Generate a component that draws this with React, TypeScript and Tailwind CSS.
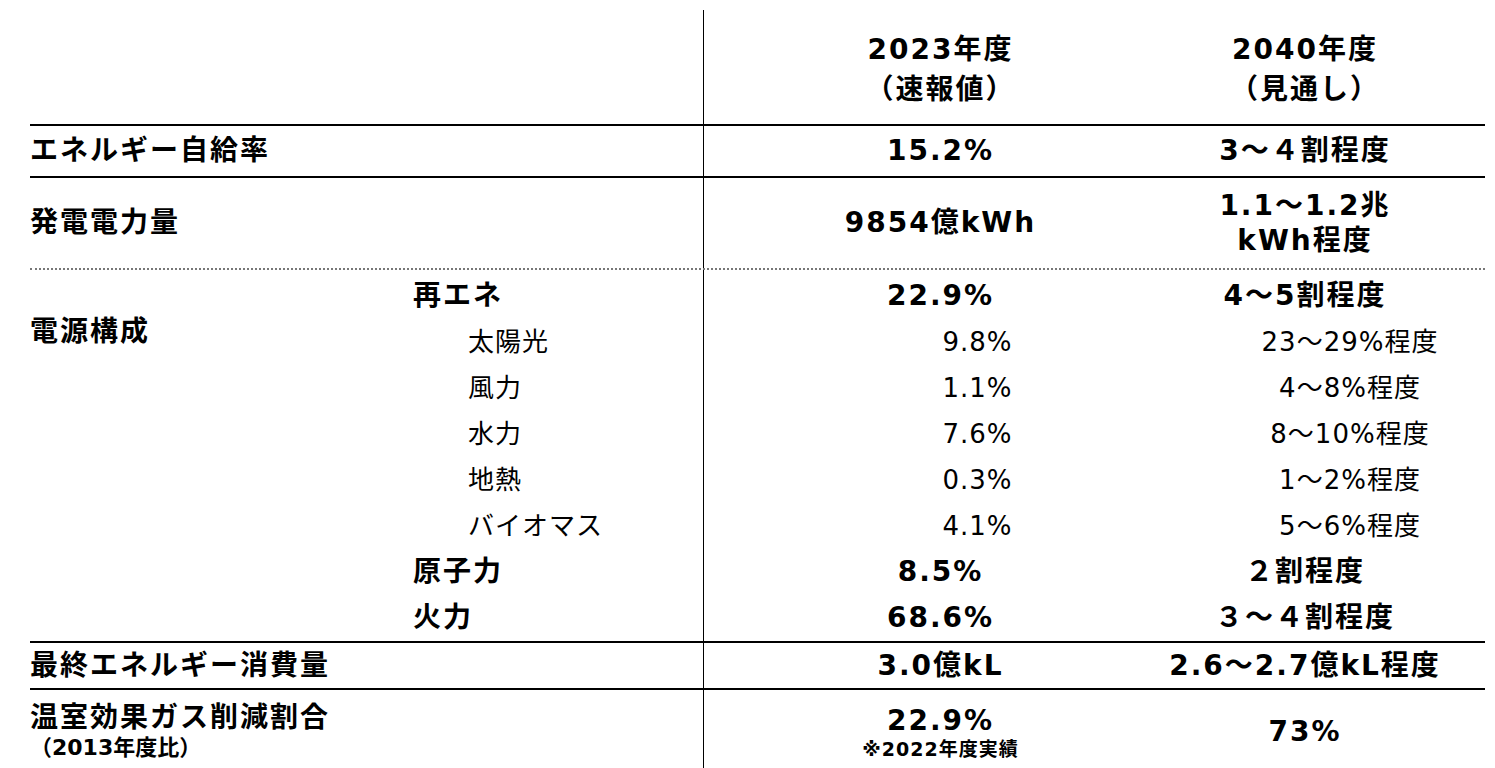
import React from "react";

const font = "font-['DejaVu_Sans','Noto_Sans_CJK_JP',sans-serif]";

type SubRow = {
  label: string;
  strong: boolean;
  now: string;
  future: string;
};

const subRows: SubRow[] = [
  { label: "再エネ", strong: true, now: "22.9%", future: "4～5割程度" },
  { label: "太陽光", strong: false, now: "9.8%", future: "23～29%程度" },
  { label: "風力", strong: false, now: "1.1%", future: "4～8%程度" },
  { label: "水力", strong: false, now: "7.6%", future: "8～10%程度" },
  { label: "地熱", strong: false, now: "0.3%", future: "1～2%程度" },
  { label: "バイオマス", strong: false, now: "4.1%", future: "5～6%程度" },
  { label: "原子力", strong: true, now: "8.5%", future: "２割程度" },
  { label: "火力", strong: true, now: "68.6%", future: "３～４割程度" },
];

const bold = "text-[28px] font-bold tracking-[2px] whitespace-nowrap";
const regular = "text-[26px] font-normal tracking-[1px] whitespace-nowrap";

const Cell = ({ className, children }: { className?: string; children?: React.ReactNode }) => (
  <div className={`flex justify-center items-center ${className ?? ""}`}>{children}</div>
);

export default function App() {
  return (
    <div className={`h-[768px] w-[1495px] overflow-hidden bg-white text-black pt-[10px] pl-[30px] ${font}`}>
      <div className="w-[1455px]">
        {/* header */}
        <div className="flex h-[116px] border-b-2 border-black">
          <div className="w-[673px]" />
          <div className="w-[474px] border-l border-black flex flex-col items-center pt-[20px]">
            <div className={`${bold} leading-[40px]`}>2023年度</div>
            <div className={`${bold} leading-[40px]`}>（速報値）</div>
          </div>
          <div className="w-[256px] flex flex-col items-center pt-[20px]">
            <div className={`${bold} leading-[40px]`}>2040年度</div>
            <div className={`${bold} leading-[40px]`}>（見通し）</div>
          </div>
        </div>

        {/* self-sufficiency */}
        <div className="flex h-[52px] border-b-2 border-black">
          <div className={`w-[673px] flex items-center ${bold}`}>エネルギー自給率</div>
          <Cell className={`w-[474px] border-l border-black ${bold}`}>15.2%</Cell>
          <Cell className={`w-[256px] ${bold}`}>3～４割程度</Cell>
        </div>

        {/* generation */}
        <div className="flex h-[92px] border-b-2 border-dotted border-[#777]">
          <div className={`w-[673px] flex items-center ${bold}`}>発電電力量</div>
          <Cell className={`w-[474px] border-l border-black ${bold}`}>9854億kWh</Cell>
          <div className="w-[256px] flex flex-col items-center justify-center">
            <div className={`${bold} leading-[35px]`}>1.1～1.2兆</div>
            <div className={`${bold} leading-[35px]`}>kWh程度</div>
          </div>
        </div>

        {/* mix */}
        <div className="flex h-[373px] border-b-2 border-black">
          <div className={`w-[383px] pt-[42px] ${bold} leading-[40px]`}>電源構成</div>
          <div className="flex flex-col">
            <div className="flex h-[3px]">
              <div className="w-[290px]" />
              <div className="w-[474px] border-l border-black" />
            </div>
            {subRows.map((r) => (
              <div key={r.label} className="flex h-[46px]">
                <div
                  className={`w-[290px] flex items-center ${r.strong ? bold : `${regular} pl-[55px]`}`}
                >
                  {r.label}
                </div>
                {r.strong ? (
                  <>
                    <Cell className={`w-[474px] border-l border-black ${bold}`}>{r.now}</Cell>
                    <Cell className={`w-[256px] ${bold}`}>{r.future}</Cell>
                  </>
                ) : (
                  <>
                    <Cell className={`w-[474px] border-l border-black pl-[74px] ${regular}`}>{r.now}</Cell>
                    <Cell className={`w-[256px] pl-[90px] ${regular}`}>{r.future}</Cell>
                  </>
                )}
              </div>
            ))}
            <div className="flex flex-1">
              <div className="w-[290px]" />
              <div className="w-[474px] border-l border-black" />
            </div>
          </div>
        </div>

        {/* final consumption */}
        <div className="flex h-[47px] border-b-2 border-black">
          <div className={`w-[673px] flex items-center ${bold}`}>最終エネルギー消費量</div>
          <Cell className={`w-[474px] border-l border-black ${bold}`}>3.0億kL</Cell>
          <Cell className={`w-[256px] ${bold}`}>2.6～2.7億kL程度</Cell>
        </div>

        {/* GHG */}
        <div className="flex h-[78px]">
          <div className="w-[673px] flex flex-col pt-[11px]">
            <div className={`${bold} leading-[34px]`}>温室効果ガス削減割合</div>
            <div className="text-[22px] font-bold leading-[26px] whitespace-nowrap">（2013年度比）</div>
          </div>
          <div className="w-[474px] border-l border-black flex flex-col items-center pt-[14px]">
            <div className={`${bold} leading-[34px]`}>22.9%</div>
            <div className="text-[19px] font-bold leading-[22px] tracking-[1px] whitespace-nowrap">※2022年度実績</div>
          </div>
          <div className="w-[256px] flex flex-col items-center pt-[25px]">
            <div className={`${bold} leading-[34px]`}>73%</div>
          </div>
        </div>
      </div>
    </div>
  );
}
